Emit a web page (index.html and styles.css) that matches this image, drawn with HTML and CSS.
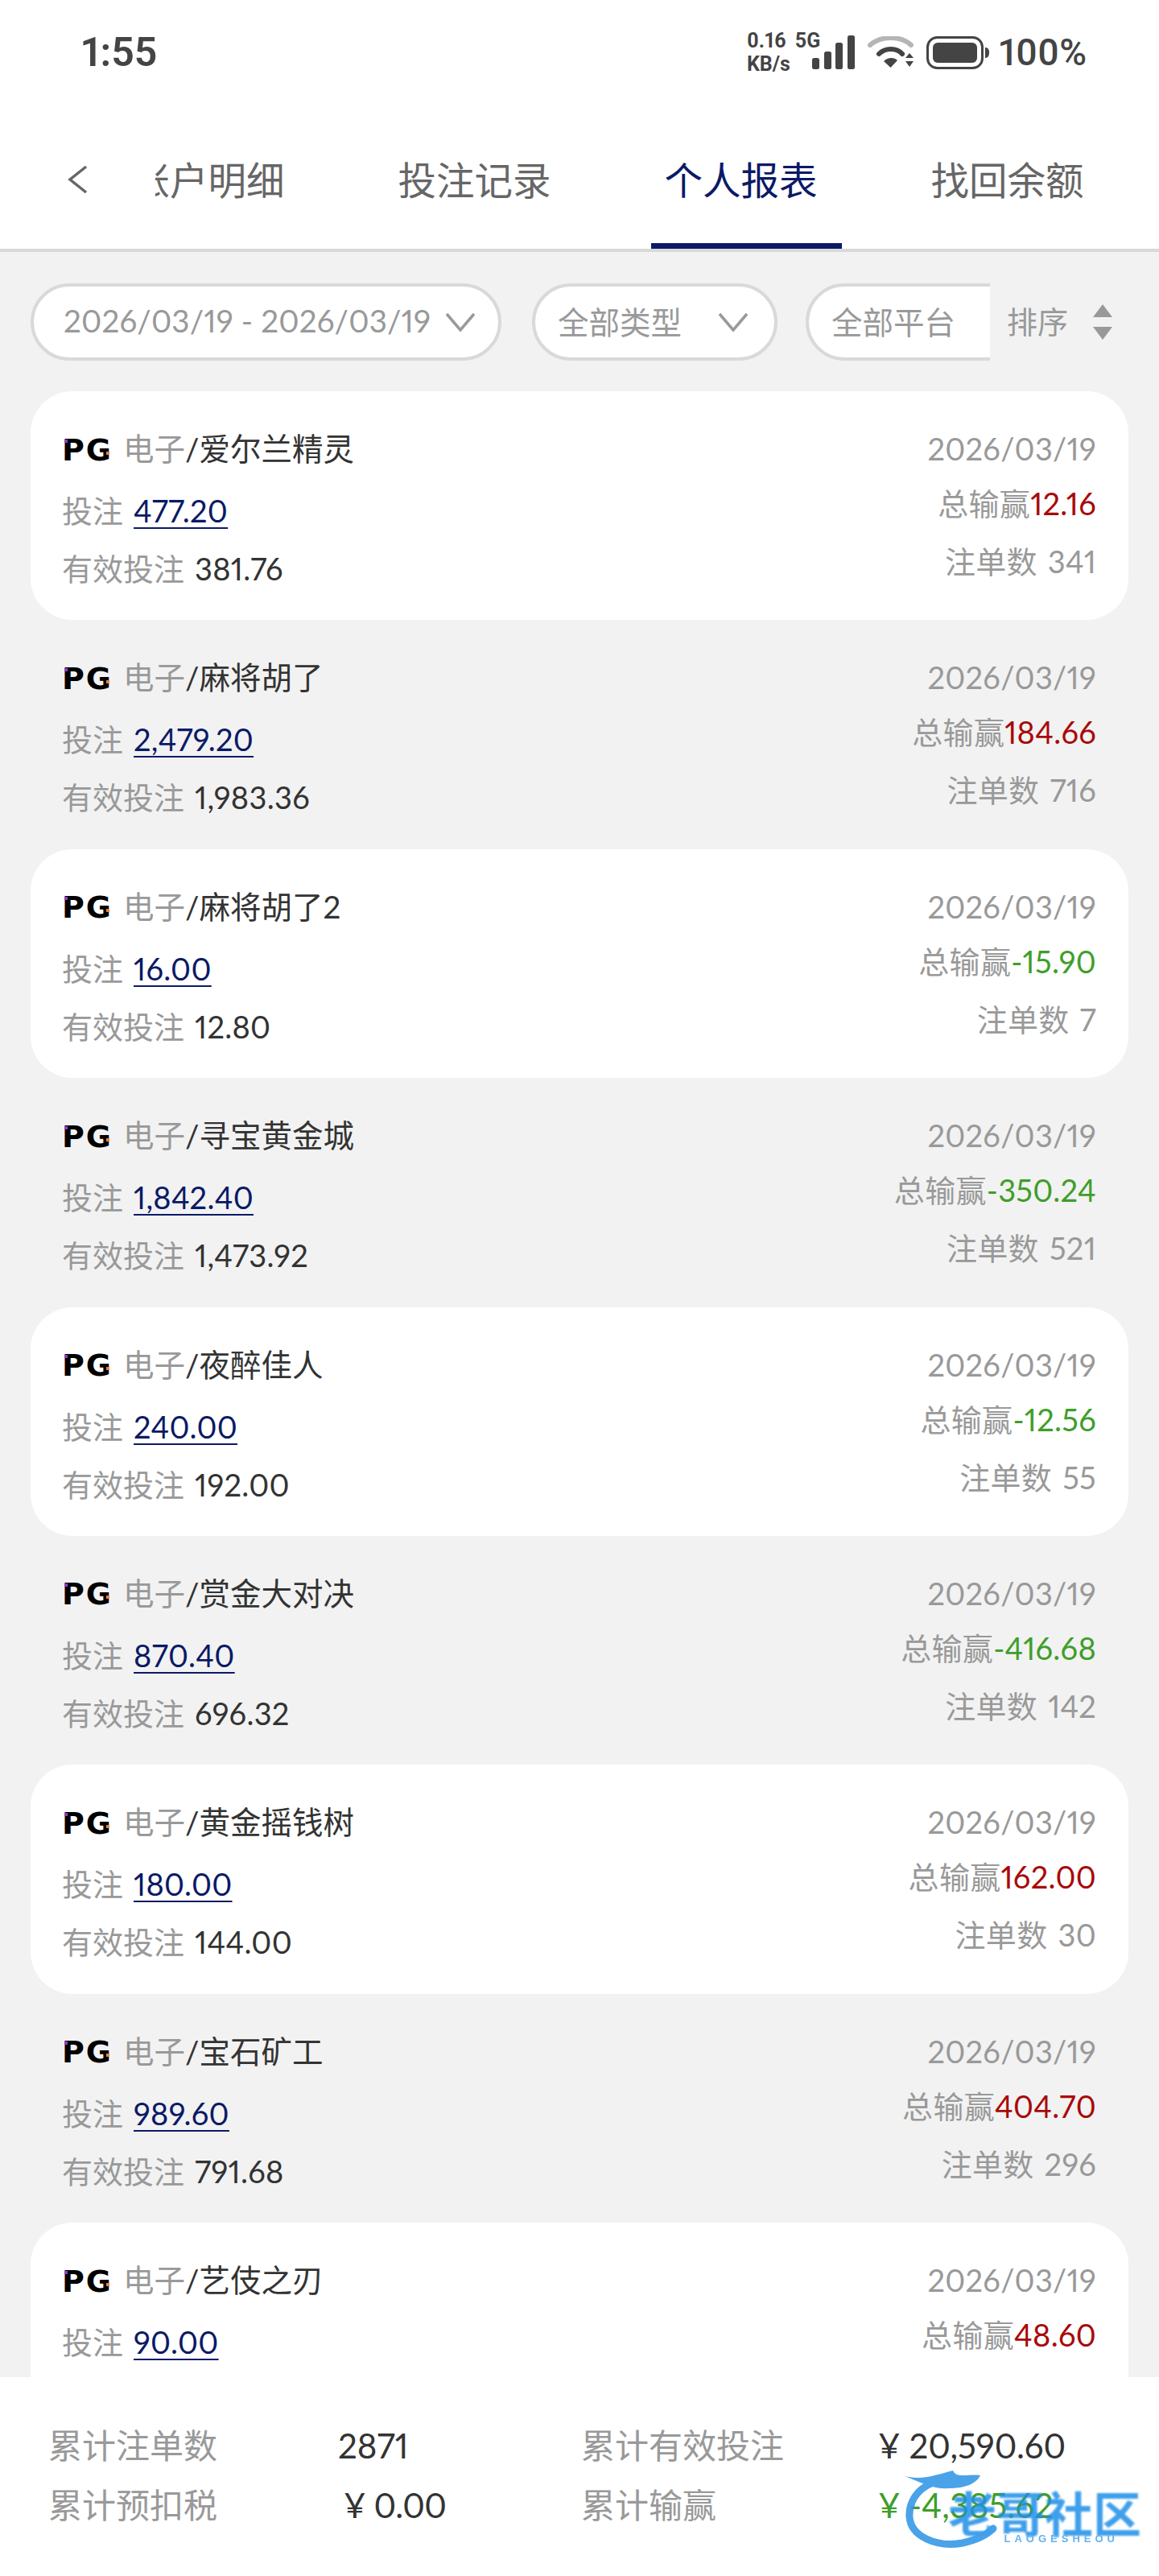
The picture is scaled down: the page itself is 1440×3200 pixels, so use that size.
FILE: index.html
```html
<!DOCTYPE html>
<html lang="zh-CN">
<head>
  <meta charset="UTF-8">
  <meta name="viewport" content="width=device-width, initial-scale=1.0">
  <title>个人报表</title>
  <link rel="stylesheet" href="styles.css">
</head>
<body>
  <div class="page">
    <header class="header">
      <div class="status-bar">
        <span class="time">1:55</span>
        <div class="status-right">
          <div class="net-speed"><span>0.16 5G</span><span>KB/s</span></div>
          <svg class="bars" width="53" height="42" viewBox="0 0 53 42" fill="#444">
            <rect x="0" y="28" width="9" height="14" rx="2.5"/>
            <rect x="15" y="20" width="9" height="22" rx="2.5"/>
            <rect x="29" y="9" width="9" height="33" rx="2.5"/>
            <rect x="44" y="0" width="9" height="42" rx="2.5"/>
          </svg>
          <svg class="wifi" width="58" height="40" viewBox="0 0 58 40">
            <path d="M3 11C17 -1 41 -1 54 11" fill="none" stroke="#b5b5b5" stroke-width="6" stroke-linecap="round"/>
            <path d="M14 22C22 14 36 14 43 22" fill="none" stroke="#444" stroke-width="6" stroke-linecap="round"/>
            <path d="M20 31C25 26 33 26 37 30L28.500 39Z" fill="#444"/>
            <path d="M47 27L52 21L57 27ZM47 31L57 31L52 38Z" fill="#444"/>
          </svg>
          <svg class="battery" width="78" height="41" viewBox="0 0 78 41">
            <rect x="1.500" y="1.500" width="68" height="38" rx="12" fill="none" stroke="#444" stroke-width="3"/>
            <rect x="8" y="8" width="55" height="25" rx="6" fill="#444"/>
            <path d="M73 14C76 14 78 16 78 20C78 25 76 27 73 27Z" fill="#444"/>
          </svg>
          <span class="battery-text">100%</span>
        </div>
      </div>
      <nav class="nav">
        <svg class="back" width="26" height="36" viewBox="0 0 26 36">
          <polyline points="24,2 4,18 24,34" fill="none" stroke="#666" stroke-width="3.500"/>
        </svg>
        <div class="tabs">
          <div class="tabs-inner">
            <a class="tab">账户明细</a>
            <a class="tab">投注记录</a>
            <a class="tab active">个人报表</a>
            <a class="tab">找回余额</a>
          </div>
        </div>
      </nav>
    </header>

    <div class="filters">
      <div class="filter-scroll">
        <div class="pill pill-date">
          <span>2026/03/19 - 2026/03/19</span>
          <svg class="chevron" width="38" height="24" viewBox="0 0 38 24"><polyline points="2,2 19,22 36,2"/></svg>
        </div>
        <div class="pill pill-type">
          <span>全部类型</span>
          <svg class="chevron" width="38" height="24" viewBox="0 0 38 24"><polyline points="2,2 19,22 36,2"/></svg>
        </div>
        <div class="pill pill-platform">
          <span>全部平台</span>
        </div>
      </div>
      <div class="sort">
        <span class="sort-label">排序</span>
        <svg width="26" height="44" viewBox="0 0 26 44" fill="#999">
          <path d="M13 0L25 16L1 16Z"/>
          <path d="M1 28L25 28L13 44Z"/>
        </svg>
      </div>
    </div>

    <main class="list">
      <div class="card">
        <div class="col-left">
          <div class="title"><span class="pg">PG</span><span class="muted">电子</span>/爱尔兰精灵</div>
          <div class="bet"><span class="muted">投注</span> <a class="link">477.20</a></div>
          <div class="valid"><span class="muted">有效投注</span> 381.76</div>
        </div>
        <div class="col-right">
          <div>2026/03/19</div>
          <div class="total">总输赢<span class="win">12.16</span></div>
          <div class="count">注单数 341</div>
        </div>
      </div>
      <div class="card">
        <div class="col-left">
          <div class="title"><span class="pg">PG</span><span class="muted">电子</span>/麻将胡了</div>
          <div class="bet"><span class="muted">投注</span> <a class="link">2,479.20</a></div>
          <div class="valid"><span class="muted">有效投注</span> 1,983.36</div>
        </div>
        <div class="col-right">
          <div>2026/03/19</div>
          <div class="total">总输赢<span class="win">184.66</span></div>
          <div class="count">注单数 716</div>
        </div>
      </div>
      <div class="card">
        <div class="col-left">
          <div class="title"><span class="pg">PG</span><span class="muted">电子</span>/麻将胡了2</div>
          <div class="bet"><span class="muted">投注</span> <a class="link">16.00</a></div>
          <div class="valid"><span class="muted">有效投注</span> 12.80</div>
        </div>
        <div class="col-right">
          <div>2026/03/19</div>
          <div class="total">总输赢<span class="lose">-15.90</span></div>
          <div class="count">注单数 7</div>
        </div>
      </div>
      <div class="card">
        <div class="col-left">
          <div class="title"><span class="pg">PG</span><span class="muted">电子</span>/寻宝黄金城</div>
          <div class="bet"><span class="muted">投注</span> <a class="link">1,842.40</a></div>
          <div class="valid"><span class="muted">有效投注</span> 1,473.92</div>
        </div>
        <div class="col-right">
          <div>2026/03/19</div>
          <div class="total">总输赢<span class="lose">-350.24</span></div>
          <div class="count">注单数 521</div>
        </div>
      </div>
      <div class="card">
        <div class="col-left">
          <div class="title"><span class="pg">PG</span><span class="muted">电子</span>/夜醉佳人</div>
          <div class="bet"><span class="muted">投注</span> <a class="link">240.00</a></div>
          <div class="valid"><span class="muted">有效投注</span> 192.00</div>
        </div>
        <div class="col-right">
          <div>2026/03/19</div>
          <div class="total">总输赢<span class="lose">-12.56</span></div>
          <div class="count">注单数 55</div>
        </div>
      </div>
      <div class="card">
        <div class="col-left">
          <div class="title"><span class="pg">PG</span><span class="muted">电子</span>/赏金大对决</div>
          <div class="bet"><span class="muted">投注</span> <a class="link">870.40</a></div>
          <div class="valid"><span class="muted">有效投注</span> 696.32</div>
        </div>
        <div class="col-right">
          <div>2026/03/19</div>
          <div class="total">总输赢<span class="lose">-416.68</span></div>
          <div class="count">注单数 142</div>
        </div>
      </div>
      <div class="card">
        <div class="col-left">
          <div class="title"><span class="pg">PG</span><span class="muted">电子</span>/黄金摇钱树</div>
          <div class="bet"><span class="muted">投注</span> <a class="link">180.00</a></div>
          <div class="valid"><span class="muted">有效投注</span> 144.00</div>
        </div>
        <div class="col-right">
          <div>2026/03/19</div>
          <div class="total">总输赢<span class="win">162.00</span></div>
          <div class="count">注单数 30</div>
        </div>
      </div>
      <div class="card">
        <div class="col-left">
          <div class="title"><span class="pg">PG</span><span class="muted">电子</span>/宝石矿工</div>
          <div class="bet"><span class="muted">投注</span> <a class="link">989.60</a></div>
          <div class="valid"><span class="muted">有效投注</span> 791.68</div>
        </div>
        <div class="col-right">
          <div>2026/03/19</div>
          <div class="total">总输赢<span class="win">404.70</span></div>
          <div class="count">注单数 296</div>
        </div>
      </div>
      <div class="card">
        <div class="col-left">
          <div class="title"><span class="pg">PG</span><span class="muted">电子</span>/艺伎之刃</div>
          <div class="bet"><span class="muted">投注</span> <a class="link">90.00</a></div>
        </div>
        <div class="col-right">
          <div>2026/03/19</div>
          <div class="total">总输赢<span class="win">48.60</span></div>
        </div>
      </div>
    </main>

    <footer class="summary">
      <span class="muted">累计注单数</span>
      <span>2871</span>
      <span class="muted">累计有效投注</span>
      <span>¥ 20,590.60</span>
      <span class="muted">累计预扣税</span>
      <span class="tax">¥ 0.00</span>
      <span class="muted">累计输赢</span>
      <span class="lose">¥ -4,385.62</span>

      <div class="watermark">
        <svg class="wm-ring" width="130" height="100" viewBox="0 0 130 100">
          <path d="M76 16C30 6 6 34 8 60C10 84 42 98 74 92C92 88 104 82 112 74" fill="none" stroke="#2b93e6" stroke-width="9" stroke-linecap="round"/>
          <path d="M0 8C22 16 44 6 62 2C66 12 80 6 96 8C90 20 74 24 58 24C40 26 24 18 0 8Z" fill="#2b93e6"/>
        </svg>
        <span class="wm-name">老哥社区</span>
        <span class="wm-sub">LAOGESHEOU</span>
      </div>
    </footer>
  </div>
</body>
</html>
```

FILE: styles.css
```css
* {
  box-sizing: border-box;
}
body {
  margin: 0;
  font-family: Lato, "Noto Sans CJK SC", sans-serif;
  font-size: 38px;
  font-variant-numeric: proportional-nums;
  color: #333;
  background-color: #f2f2f2;
}
.page {
  display: flex;
  flex-direction: column;
  height: 3200px;
  overflow: hidden;
}
.muted {
  color: #999;
  letter-spacing: 0;
}

/* top bar */
.header {
  background: #fff;
  height: 313px;
  border-bottom: 4px solid #d9d9d9;
  flex-shrink: 0;
}
.status-bar {
  display: flex;
  justify-content: space-between;
  align-items: center;
  height: 130px;
  padding: 0 90px 0 101px;
  color: #444;
}
.time {
  font-family: Roboto, sans-serif;
  font-size: 50px;
  font-weight: 600;
}
.status-right {
  display: flex;
  align-items: center;
}
.net-speed {
  display: flex;
  flex-direction: column;
  width: 96px;
  font-family: Roboto, sans-serif;
  font-size: 25px;
  font-weight: 700;
  line-height: 29px;
  word-spacing: 5px;
  white-space: pre;
}
.bars {
  margin-left: -15px;
}
.wifi {
  margin-left: 16px;
}
.battery {
  margin-left: 15px;
}
.battery-text {
  margin-left: 12px;
  font-family: Roboto, sans-serif;
  font-size: 46px;
  font-weight: 500;
}
.nav {
  display: flex;
  align-items: center;
  height: 179px;
}
.back {
  margin-left: 83px;
  margin-top: 6px;
  flex-shrink: 0;
}
.tabs {
  margin-left: 84px;
  flex: 1;
  overflow: hidden;
  height: 179px;
}
.tabs-inner {
  display: flex;
  gap: 94px;
  margin-left: -46px;
}
.tab {
  display: block;
  flex-shrink: 0;
  width: 237px;
  height: 179px;
  padding: 64px 14px 0 0;
  text-align: center;
  font-size: 47.500px;
  line-height: 60px;
  color: #666;
}
.tab.active {
  color: #0b1a66;
  border-bottom: 7px solid #0b1a66;
}

/* filters */
.filters {
  display: flex;
  align-items: center;
  height: 173px;
  padding: 0 0 0 38px;
  flex-shrink: 0;
}
.filter-scroll {
  display: flex;
  width: 1192px;
  overflow: hidden;
  flex-shrink: 0;
}
.pill {
  display: flex;
  align-items: center;
  justify-content: space-between;
  flex-shrink: 0;
  height: 96px;
  background: #fff;
  border: 4px solid #d9d9d9;
  border-radius: 48px;
  color: #999;
  font-size: 38.500px;
}
.pill span {
  margin-bottom: 3px;
}
.pill-date {
  width: 585px;
  padding: 0 28px 0 37px;
  margin-right: 38px;
  letter-spacing: 0.150px;
}
.pill-type {
  width: 305px;
  padding: 0 32px 0 28px;
  margin-right: 35px;
}
.pill-platform {
  width: 320px;
  padding: 0 28px;
}
.chevron polyline {
  fill: none;
  stroke: #999;
  stroke-width: 3.500;
}
.sort {
  display: flex;
  align-items: center;
  gap: 30px;
  margin-left: 21px;
  color: #999;
}
.sort-label {
  margin-bottom: 4px;
}

/* list */
.list {
  flex: 1;
  min-height: 0;
  overflow: hidden;
  padding: 0 38px;
}
.card {
  display: flex;
  justify-content: space-between;
  flex-shrink: 0;
  height: 284.400px;
  padding: 47px 40px 0 39px;
  border-radius: 52px;
  line-height: 48px;
  letter-spacing: 0.300px;
  word-spacing: 3px;
}
.card:nth-child(odd) {
  background: #fff;
}
.title {
  display: flex;
  align-items: center;
  height: 48px;
  font-size: 38.500px;
  letter-spacing: 0;
  white-space: pre;
}
.pg {
  position: relative;
  margin-top: 3px;
  margin-right: 13px;
  font-family: "DejaVu Sans", sans-serif;
  font-size: 38px;
  font-weight: 700;
  line-height: 38px;
  letter-spacing: 2px;
  color: #000;
}
.pg::before {
  content: "";
  position: absolute;
  left: 3px;
  top: 6px;
  width: 4px;
  height: 4px;
  background: #8a3fd0;
}
.pg::after {
  content: "";
  position: absolute;
  right: 4px;
  bottom: 13px;
  width: 4px;
  height: 4px;
  background: #f08030;
}
.bet {
  margin-top: 29px;
}
.valid {
  margin-top: 24px;
}
.link {
  color: #0b1a66;
  text-decoration: underline;
  text-decoration-thickness: 2px;
  text-underline-offset: 6px;
}
.col-right {
  text-align: right;
  color: #999;
}
.total {
  margin-top: 20px;
}
.count {
  margin-top: 24px;
}
.win {
  color: #a80a0a;
}
.lose {
  color: #3f9e2a;
}

/* summary */
.summary {
  position: relative;
  display: grid;
  grid-template-columns: 360px 302px 369px auto;
  align-content: start;
  row-gap: 14px;
  flex-shrink: 0;
  height: 247px;
  padding: 55px 0 0 60px;
  background: #fff;
  font-size: 42px;
  line-height: 60px;
}
.tax {
  margin-left: 7px;
  letter-spacing: -0.500px;
}
.watermark {
  position: absolute;
  right: 22px;
  bottom: 35px;
  width: 296px;
  height: 98px;
  opacity: 0.85;
}
.wm-ring {
  position: absolute;
  left: 0;
  top: 0;
}
.wm-name {
  position: absolute;
  right: 0;
  top: 32px;
  font-size: 60px;
  font-weight: 700;
  line-height: 48px;
  color: #1f8fe8;
  filter: blur(0.8px);
}
.wm-sub {
  position: absolute;
  right: 28px;
  top: 80px;
  font-family: "Liberation Sans", sans-serif;
  font-size: 13px;
  font-weight: 700;
  letter-spacing: 5px;
  line-height: 13px;
  color: #4aa5ea;
  filter: blur(0.5px);
}
```
